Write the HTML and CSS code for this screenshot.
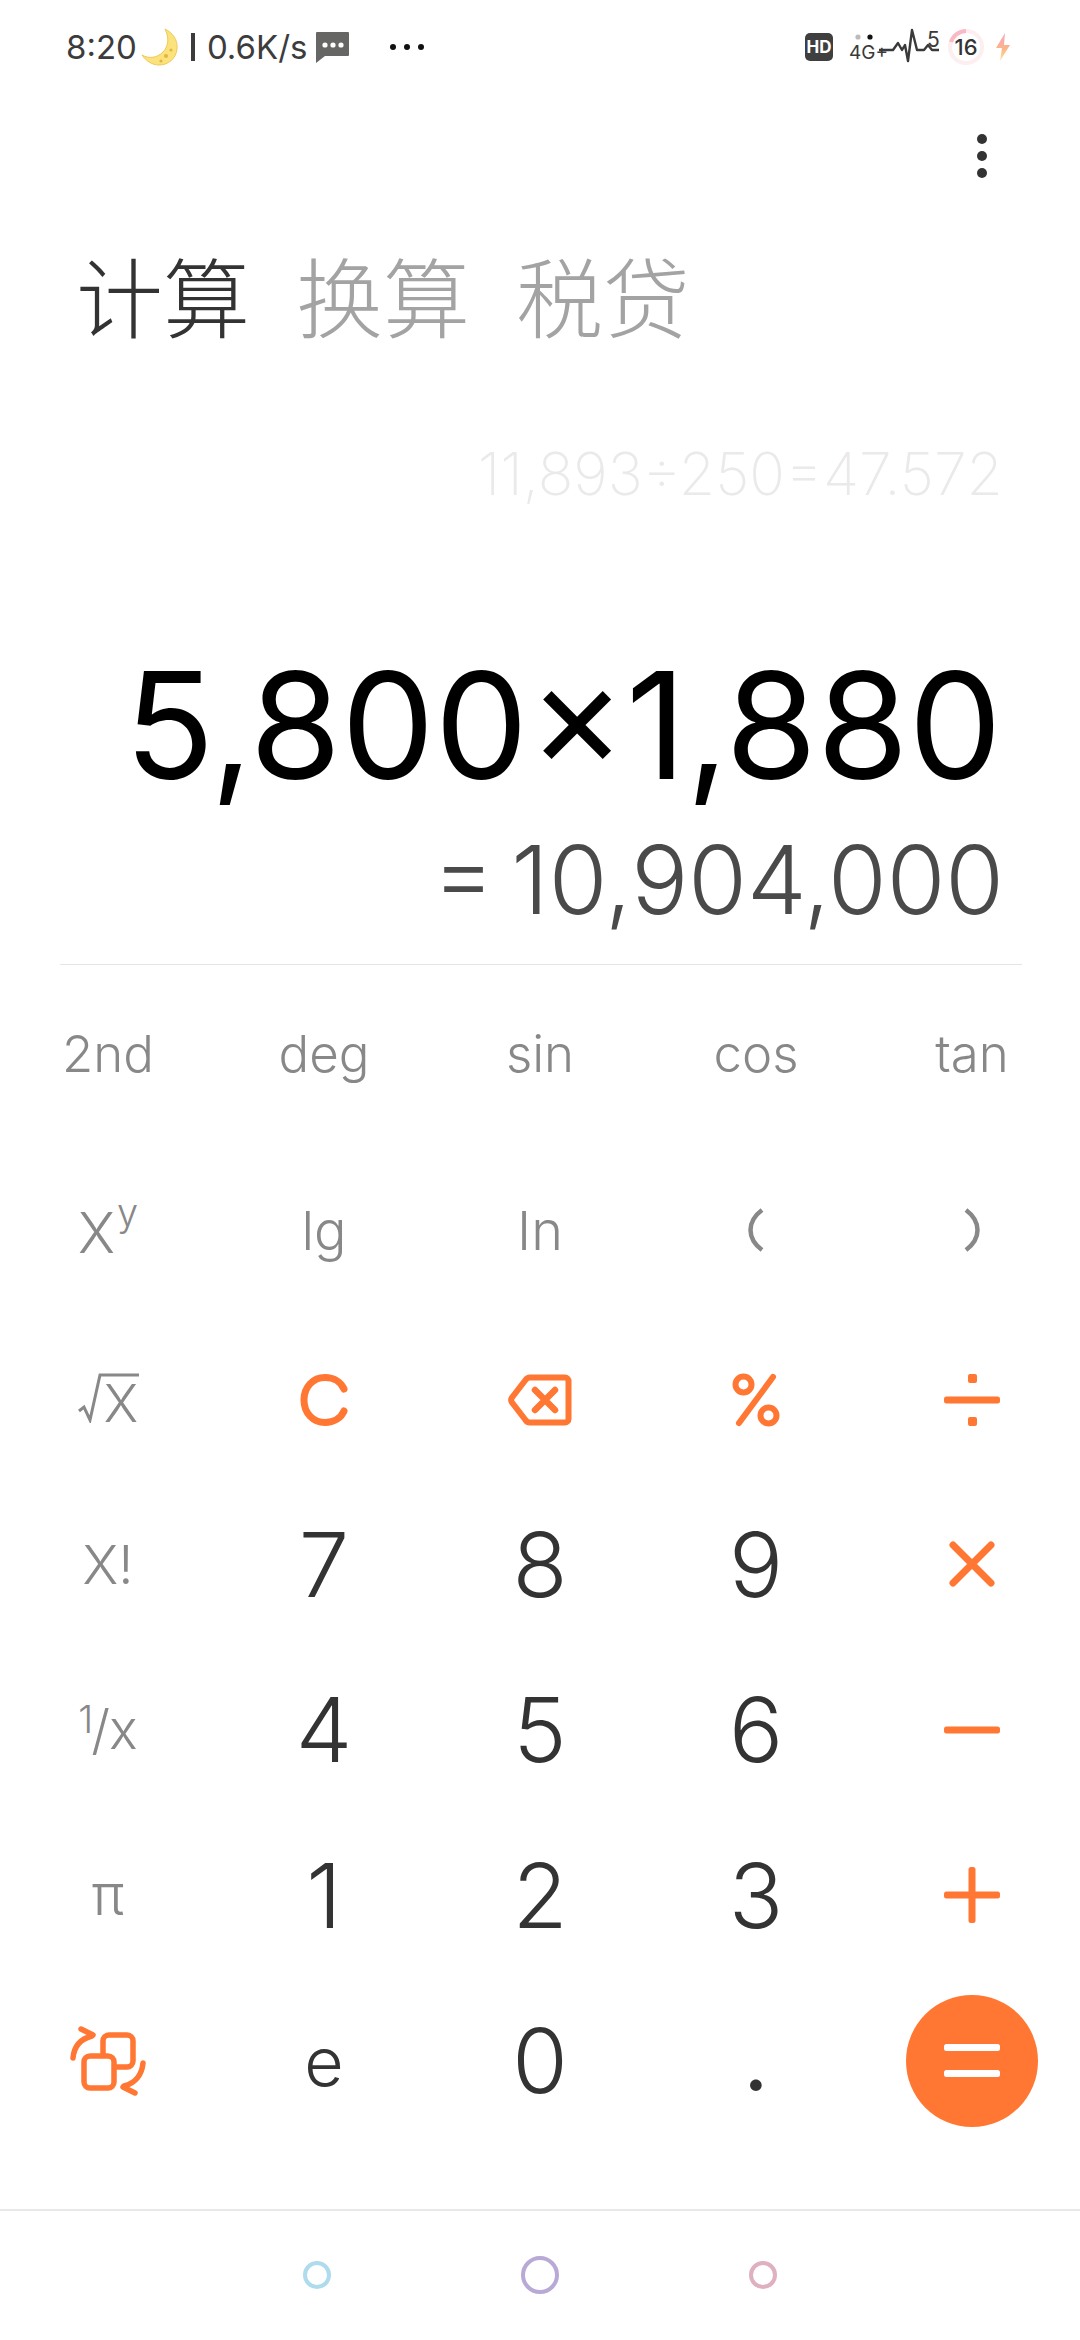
FILE: index.html
```html
<!DOCTYPE html>
<html lang="zh-CN">
<head>
    <meta charset="UTF-8">
    <meta name="viewport" content="width=device-width, initial-scale=1.0">
    <title>计算器</title>
    <link rel="stylesheet" href="styles.css">
</head>
<body>
    <div class="status-bar">
        <div class="status-left">
            <span class="status-text">8:20</span>
            <svg class="moon" width="38" height="38" viewBox="0 0 38 38">
                <path d="M24 1C32 5 37 12 36 21C35 31 27 37 18 37C11 37 5 33 1 27C8 31 16 30 22 24C28 18 28 9 24 1Z" fill="#fbe27c" stroke="#eec95a" stroke-width="1"/>
                <circle cx="30" cy="22" r="1.6" fill="#e3b640"/>
                <circle cx="25" cy="28" r="2" fill="#e3b640"/>
                <circle cx="20" cy="33" r="1.6" fill="#e3b640"/>
            </svg>
            <span class="status-sep"></span>
            <span class="status-text status-speed">0.6K/s</span>
            <svg class="msg-icon" width="33" height="31" viewBox="0 0 33 31">
                <path d="M1 0H32Q33 0 33 1V23Q33 24 32 24H9L0 31V1Q0 0 1 0Z" fill="#666764"/>
                <circle cx="9" cy="13" r="2.6" fill="#fff"/>
                <circle cx="17" cy="13" r="2.6" fill="#fff"/>
                <circle cx="25" cy="13" r="2.6" fill="#fff"/>
            </svg>
            <div class="status-more"><i></i><i></i><i></i></div>
        </div>
        <div class="status-right">
            <span class="hd-badge">HD</span>
            <svg class="signal" width="90" height="42" viewBox="0 0 90 42">
                <circle cx="9" cy="11" r="2.6" fill="#bbb"/>
                <circle cx="21" cy="11" r="2.6" fill="#111"/>
                <text x="0" y="33" class="signal-text">4G+</text>
                <path d="M30 24H44L49 17L53 24L56 19L59 35L63 4L68 24H75L79 19L83 24H90" fill="none" stroke="#3a3a3a" stroke-width="2.4" stroke-linejoin="round"/>
                <text x="78" y="21" class="signal-five">5</text>
            </svg>
            <div class="battery">
                <svg class="battery-ring" width="38" height="38" viewBox="0 0 38 38">
                    <circle cx="19" cy="19" r="16" fill="none" stroke="#fdeef0" stroke-width="4"/>
                    <path d="M4 14A16 16 0 0 1 19 3" fill="none" stroke="#f9b9c6" stroke-width="4"/>
                </svg>
                <span class="battery-level">16</span>
            </div>
            <svg class="bolt" width="14" height="28" viewBox="0 0 14 28">
                <defs>
                    <linearGradient id="boltFill" x1="0" y1="0" x2="0" y2="1">
                        <stop offset="0" stop-color="#f4a6d0"/>
                        <stop offset="0.55" stop-color="#fbb487"/>
                        <stop offset="1" stop-color="#fde6a0"/>
                    </linearGradient>
                </defs>
                <path d="M9 0L0 15H6L4 28L14 12H8Z" fill="url(#boltFill)"/>
            </svg>
        </div>
    </div>

    <div class="toolbar">
        <div class="more-btn"><i></i><i></i><i></i></div>
    </div>

    <div class="tabs">
        <span class="tab active">计算</span>
        <span class="tab">换算</span>
        <span class="tab">税贷</span>
    </div>

    <div class="display">
        <div class="history">11,893÷250=47.572</div>
        <div class="expression">5,800×1,880</div>
        <div class="result">= 10,904,000</div>
    </div>
    <div class="divider"></div>

    <div class="keypad">
        <div class="key fn">2nd</div>
        <div class="key fn">deg</div>
        <div class="key fn">sin</div>
        <div class="key fn">cos</div>
        <div class="key fn">tan</div>

        <div class="key sci"><span class="base-x">X</span><span class="power">y</span></div>
        <div class="key sci">lg</div>
        <div class="key sci">In</div>
        <div class="key sci">
            <svg width="16" height="44" viewBox="0 0 16 44">
                <path d="M14 2C6 8 2.500 15 2.500 22C2.500 29 6 36 14 42" fill="none" stroke="#888" stroke-width="4.500"/>
            </svg>
        </div>
        <div class="key sci">
            <svg width="16" height="44" viewBox="0 0 16 44">
                <path d="M2 2C10 8 13.500 15 13.500 22C13.500 29 10 36 2 42" fill="none" stroke="#888" stroke-width="4.500"/>
            </svg>
        </div>

        <div class="key sci">
            <svg class="root-sign" width="62" height="50" viewBox="0 0 62 50">
                <path d="M1 38L6 34L12 47L22 2H61" fill="none" stroke="#888" stroke-width="3"/>
            </svg>
            <span class="root-x">X</span>
        </div>
        <div class="key">
            <svg width="48" height="52" viewBox="0 0 48 52">
                <path d="M44 15C41 8 34 3.500 25 3.500C13 3.500 4 13 4 26C4 39 13 48.500 25 48.500C34 48.500 41 44 44 37" fill="none" stroke="#ff7733" stroke-width="7" stroke-linecap="round"/>
            </svg>
        </div>
        <div class="key">
            <svg width="64" height="52" viewBox="0 0 64 52">
                <path d="M22 3.500H57C59 3.500 60.500 5 60.500 7V45C60.500 47 59 48.500 57 48.500H22C20 48.500 18.500 47.500 17.500 46L4 28.500C3 27 3 25 4 23.500L17.500 6C18.500 4.500 20 3.500 22 3.500Z" fill="none" stroke="#ff7733" stroke-width="6" stroke-linejoin="round"/>
                <path d="M27 16L47 36M47 16L27 36" fill="none" stroke="#ff7733" stroke-width="6.500" stroke-linecap="round"/>
            </svg>
        </div>
        <div class="key">
            <svg width="48" height="54" viewBox="0 0 48 54">
                <circle cx="11.500" cy="11.500" r="8" fill="none" stroke="#ff7733" stroke-width="6"/>
                <circle cx="36.500" cy="42.500" r="8" fill="none" stroke="#ff7733" stroke-width="6"/>
                <path d="M41 4L7 50" fill="none" stroke="#ff7733" stroke-width="6" stroke-linecap="round"/>
            </svg>
        </div>
        <div class="key">
            <svg width="56" height="54" viewBox="0 0 56 54">
                <rect x="24" y="1" width="9" height="9" rx="2" fill="#ff7733"/>
                <rect x="0" y="23.500" width="56" height="7" rx="2.500" fill="#ff7733"/>
                <rect x="24" y="44" width="9" height="9" rx="2" fill="#ff7733"/>
            </svg>
        </div>

        <div class="key sci">X!</div>
        <div class="key num">7</div>
        <div class="key num">8</div>
        <div class="key num">9</div>
        <div class="key">
            <svg width="46" height="46" viewBox="0 0 46 46">
                <path d="M4 4L42 42M42 4L4 42" fill="none" stroke="#ff7733" stroke-width="7" stroke-linecap="round"/>
            </svg>
        </div>

        <div class="key sci fraction"><span class="frac-one">1</span><span class="frac-slash">/</span><span>x</span></div>
        <div class="key num">4</div>
        <div class="key num">5</div>
        <div class="key num">6</div>
        <div class="key">
            <svg width="56" height="8" viewBox="0 0 56 8">
                <rect x="0" y="0.500" width="56" height="7" rx="2.500" fill="#ff7733"/>
            </svg>
        </div>

        <div class="key sci pi">π</div>
        <div class="key num">1</div>
        <div class="key num">2</div>
        <div class="key num">3</div>
        <div class="key">
            <svg width="56" height="56" viewBox="0 0 56 56">
                <rect x="0" y="24.500" width="56" height="7" rx="2.500" fill="#ff7733"/>
                <rect x="24.500" y="0" width="7" height="56" rx="2.500" fill="#ff7733"/>
            </svg>
        </div>

        <div class="key">
            <svg width="78" height="70" viewBox="0 0 78 70">
                <rect x="34" y="9" width="30" height="32" rx="6" fill="none" stroke="#ff7733" stroke-width="5.500"/>
                <rect x="15" y="30" width="30" height="32" rx="6" fill="#fff" stroke="#ff7733" stroke-width="5.500"/>
                <path d="M4 32C5 21 11 13 23 10M12 3L24 9" fill="none" stroke="#ff7733" stroke-width="5.500" stroke-linecap="round"/>
                <path d="M74 37C73 48 67 57 55 60M66 67L54 61" fill="none" stroke="#ff7733" stroke-width="5.500" stroke-linecap="round"/>
            </svg>
        </div>
        <div class="key num letter">e</div>
        <div class="key num">0</div>
        <div class="key num point">.</div>
        <div class="key">
            <div class="equals-btn"><i></i><i></i></div>
        </div>
    </div>

    <div class="nav-bar">
        <div class="nav-dot nav-back"></div>
        <div class="nav-dot nav-home"></div>
        <div class="nav-dot nav-recent"></div>
    </div>
</body>
</html>
```

FILE: styles.css
```css
body {
    font-family: 'Inter', 'Noto Sans CJK SC', sans-serif;
    margin: 0;
    width: 1080px;
    height: 2340px;
    background-color: #fff;
    color: #333;
    overflow: hidden;
}
.status-bar {
    height: 94px;
    display: flex;
    justify-content: space-between;
    align-items: center;
    padding: 0 70px 0 66px;
}
.status-left,
.status-right {
    display: flex;
    align-items: center;
}
.status-text {
    font-size: 33px;
    color: #3c3c3c;
}
.moon {
    margin-left: 4px;
}
.status-sep {
    width: 4px;
    height: 28px;
    margin-left: 12px;
    background-color: #3c3c3c;
}
.status-speed {
    margin-left: 12px;
}
.msg-icon {
    margin-left: 9px;
}
.status-more {
    display: flex;
    gap: 8px;
    margin-left: 41px;
}
.status-more i {
    width: 6px;
    height: 6px;
    border-radius: 50%;
    background-color: #111;
}
.hd-badge {
    width: 28px;
    height: 28px;
    border-radius: 5px;
    background-color: #3f3f3f;
    color: #fff;
    font-size: 17px;
    font-weight: 700;
    line-height: 28px;
    text-align: center;
}
.signal {
    margin-left: 16px;
}
.signal-text {
    font-size: 19px;
    font-family: 'Inter', sans-serif;
    fill: #3a3a3a;
}
.signal-five {
    font-size: 21px;
    font-family: 'Inter', sans-serif;
    fill: #3a3a3a;
}
.battery {
    width: 38px;
    height: 38px;
    margin-left: 8px;
    display: flex;
    align-items: center;
    justify-content: center;
    position: relative;
}
.battery-ring {
    position: absolute;
    top: 0;
    left: 0;
}
.battery-level {
    position: relative;
    font-size: 22px;
    font-weight: 500;
    color: #333;
}
.bolt {
    margin-left: 11px;
}
.toolbar {
    height: 90px;
    display: flex;
    justify-content: flex-end;
    align-items: flex-start;
    padding: 0 93px 0 0;
}
.more-btn {
    display: flex;
    flex-direction: column;
    gap: 7px;
    margin-top: 40px;
}
.more-btn i {
    width: 10px;
    height: 10px;
    border-radius: 50%;
    background-color: #333;
}
.tabs {
    display: flex;
    gap: 46px;
    padding-left: 76px;
    margin-top: 60px;
}
.tab {
    font-family: 'Noto Sans CJK SC', sans-serif;
    font-size: 87px;
    font-weight: 300;
    line-height: 100px;
    color: #a3a3a3;
}
.tab.active {
    color: #333;
}
.display {
    display: flex;
    flex-direction: column;
    align-items: flex-end;
    height: 620px;
    padding-right: 80px;
    box-sizing: border-box;
}
.history {
    margin-top: 94px;
    margin-right: -3px;
    font-size: 59px;
    font-weight: 200;
    line-height: 72px;
    color: #ebe9e9;
}
.expression {
    margin-top: 126px;
    margin-right: -2px;
    font-size: 148px;
    font-weight: 400;
    line-height: 180px;
    color: #000;
}
.result {
    margin-top: 14px;
    margin-right: -4px;
    font-size: 95px;
    font-weight: 350;
    line-height: 100px;
    word-spacing: -10px;
    color: #4a4a4a;
}
.divider {
    height: 1px;
    margin: 0 58px 0 60px;
    background-color: #e5e5e5;
}
.keypad {
    display: grid;
    grid-template-columns: repeat(5, 216px);
    grid-template-rows: 176px 178px 162.500px repeat(4, 165.500px);
}
.key {
    display: flex;
    align-items: center;
    justify-content: center;
}
.fn {
    font-size: 51px;
    font-weight: 350;
    color: #888;
}
.sci {
    font-size: 54px;
    font-weight: 350;
    color: #888;
}
.num {
    font-size: 90px;
    font-weight: 350;
    color: #333;
}
.num.letter {
    font-size: 68px;
}
.num.point {
    font-size: 80px;
    font-weight: 500;
}
.base-x {
    font-size: 56px;
    font-weight: 300;
    margin-top: 6px;
}
.power {
    font-size: 38px;
    font-weight: 300;
    margin-left: 2px;
    margin-bottom: 36px;
}
.root-sign {
    margin-right: -36px;
    margin-bottom: 4px;
}
.root-x {
    font-size: 52px;
    font-weight: 300;
    margin-top: 6px;
}
.fraction {
    font-size: 54px;
    font-weight: 300;
}
.frac-one {
    font-size: 38px;
    margin-bottom: 22px;
}
.frac-slash {
    margin: 0 -1px 0 -2px;
}
.pi {
    font-size: 56px;
}
.equals-btn {
    width: 132px;
    height: 132px;
    border-radius: 50%;
    background-color: #ff7733;
    display: flex;
    flex-direction: column;
    align-items: center;
    justify-content: center;
    gap: 19px;
}
.equals-btn i {
    width: 56px;
    height: 7px;
    border-radius: 2.500px;
    background-color: #fff;
}
.nav-bar {
    margin-top: 65px;
    height: 130px;
    border-top: 2px solid #e8e8e8;
    box-sizing: border-box;
    display: flex;
    align-items: center;
    justify-content: center;
    gap: 190px;
}
.nav-dot {
    width: 28px;
    height: 28px;
    border-radius: 50%;
    border-style: solid;
    border-width: 4px;
    box-sizing: border-box;
}
.nav-back {
    border-color: #aedcec;
}
.nav-home {
    width: 38px;
    height: 38px;
    border-color: #b8a9d6;
}
.nav-recent {
    border-color: #dfb0c0;
}
```
